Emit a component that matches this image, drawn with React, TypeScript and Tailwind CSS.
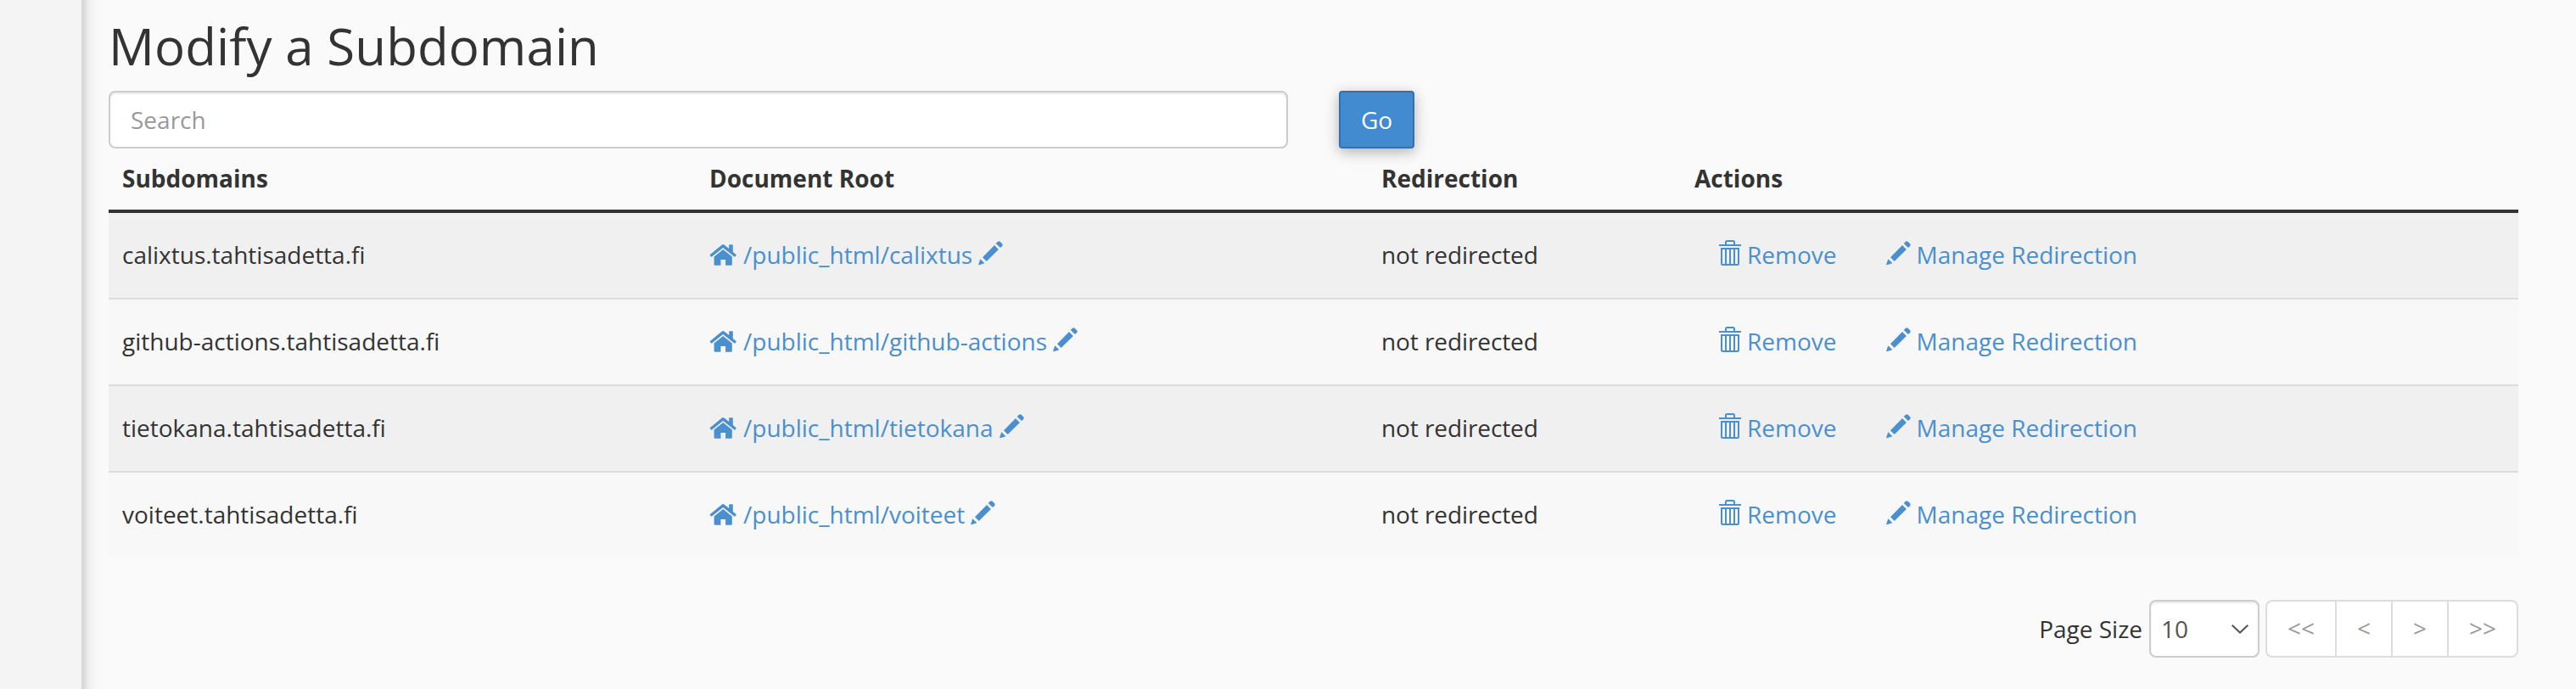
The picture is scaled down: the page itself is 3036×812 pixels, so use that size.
import React from "react";

type Subdomain = { name: string; root: string };

const subdomains: Subdomain[] = [
  { name: "calixtus.tahtisadetta.fi", root: "/public_html/calixtus" },
  { name: "github-actions.tahtisadetta.fi", root: "/public_html/github-actions" },
  { name: "tietokana.tahtisadetta.fi", root: "/public_html/tietokana" },
  { name: "voiteet.tahtisadetta.fi", root: "/public_html/voiteet" },
];

function HomeIcon() {
  return (
    <svg className="h-[26px] w-8 shrink-0" viewBox="-0.5 0 32 26" fill="currentColor">
      <path d="M15.700 5.900 26.300 14.600V23.700a1.100 1.100 0 0 1-1.100 1.100H18.600V18h-5.700v6.800H6.200A1.100 1.100 0 0 1 5.100 23.700V14.600Z" />
      <path d="M14.100.7a2.500 2.500 0 0 1 3.200 0L22.700 5.100V.8a.6.6 0 0 1 .6-.6h3.400a.6.6 0 0 1 .6.600V9l3.700 3.100a.6.600 0 0 1 .1.900l-1.300 1.500a.6.600 0 0 1-.9.100L15.700 3.900 2.500 14.600a.6.600 0 0 1-.9-.1L.3 13a.6.600 0 0 1 .1-.9Z" />
    </svg>
  );
}

function PencilIcon() {
  return (
    <svg className="h-[29px] w-[29px] shrink-0" viewBox="0 0 29 29" fill="currentColor">
      <path d="M2.300 21.300 7.400 26.300.900 28.300Q0 28.500.2 27.600Z" />
      <path d="M5 19.300 19 5l4.900 4.900L9.700 24Z" />
      <path d="M20.700 3 22.700 1a2.300 2.300 0 0 1 3.200 0l2 2a2.300 2.300 0 0 1 0 3.200L25.900 8.100Z" />
    </svg>
  );
}

function TrashIcon() {
  return (
    <svg className="h-[30px] w-[26px] shrink-0" viewBox="0 0 26 30" fill="none" stroke="currentColor" strokeWidth="2">
      <path d="M0 6h26M8 6V2.500a1.500 1.500 0 0 1 1.500-1.500h7A1.500 1.500 0 0 1 18 2.500V6" />
      <path d="M3 10h20v17.500a1.500 1.500 0 0 1-1.500 1.500h-17A1.500 1.500 0 0 1 3 27.500ZM8 10v18M13 10v18M18 10v18" />
    </svg>
  );
}

const columns = "grid grid-cols-[692px_792px_369px_1fr] pl-4";

export default function App() {
  return (
    <div className="flex h-[812px] w-[3036px] overflow-hidden bg-[#fafafa] font-['Open_Sans',sans-serif] text-[28px] leading-10 text-[#333]">
      <aside className="w-24 shrink-0 bg-[#f4f4f4]" />
      <div className="w-8 shrink-0 bg-[linear-gradient(to_right,#d9d9d9_0px,#dadada_3px,#e6e6e6_6px,#f1f1f1_10px,#f8f8f8_16px,#fafafa_24px)]" />
      <main className="w-[2840px]">
        <h1 className="h-[107px] pt-[21px] text-[60px] leading-[66px] tracking-[0.07px]">Modify a Subdomain</h1>
        <div className="flex gap-[60px]">
          <input
            placeholder="Search"
            className="h-[68px] w-[1390px] rounded-lg border-2 border-[#ccc] bg-white px-6 shadow-[inset_0_2px_2px_rgba(0,0,0,0.075)] placeholder:text-[#999]"
          />
          <button className="h-[68px] w-[89px] rounded-sm border-2 border-[#3070b3] bg-[#428bd0] text-white shadow-[0_4px_16px_rgba(0,0,0,0.3)]">
            Go
          </button>
        </div>
        <div className={`${columns} h-[76px] border-b-4 border-[#333] pt-[15px] font-bold`}>
          <div>Subdomains</div>
          <div>Document Root</div>
          <div>Redirection</div>
          <div>Actions</div>
        </div>
        <div className="divide-y-2 divide-[#ddd]">
          {subdomains.map((s) => (
            <div key={s.name} className="box-content h-[100px] odd:bg-[#f0f0f0] even:bg-[#f8f8f8]">
              <div className={`${columns} pt-[29px]`}>
                <div>{s.name}</div>
                <div className="flex text-[#4a8fce]">
                  <span className="mt-2"><HomeIcon /></span>
                  <span className="ml-2 mr-[7px]">{s.root}</span>
                  <span className="mt-1"><PencilIcon /></span>
                </div>
                <div className="tracking-[-0.09px]">not redirected</div>
                <div className="flex pl-[29px] text-[#4a8fce]">
                  <span className="mt-[3px]"><TrashIcon /></span>
                  <span className="ml-[7px]">Remove</span>
                  <span className="ml-[59px] mt-1"><PencilIcon /></span>
                  <span className="ml-[6px]">Manage Redirection</span>
                </div>
              </div>
            </div>
          ))}
        </div>
        <div className="mt-[50px] flex items-center justify-end">
          <span className="mr-2">Page Size</span>
          <div className="mr-[7px] flex h-[68px] w-[130px] items-center justify-between rounded-lg border-2 border-[#ccc] bg-white pl-3 pr-[11px] text-[#555] shadow-[inset_0_2px_2px_rgba(0,0,0,0.075)]">
            <span>10</span>
            <svg className="h-3 w-5" viewBox="0 0 20 12" fill="none" stroke="currentColor" strokeWidth="2">
              <path d="m.7 1.700 9.300 8.800 9.300-8.800" />
            </svg>
          </div>
          <div className="flex h-[68px] divide-x-2 divide-[#ddd] rounded-lg border-2 border-[#ddd] bg-white text-center leading-[62px] text-[#999]">
            <span className="w-[82px]">&lt;&lt;</span>
            <span className="w-[66px]">&lt;</span>
            <span className="w-[66px]">&gt;</span>
            <span className="w-[80px]">&gt;&gt;</span>
          </div>
        </div>
      </main>
    </div>
  );
}
